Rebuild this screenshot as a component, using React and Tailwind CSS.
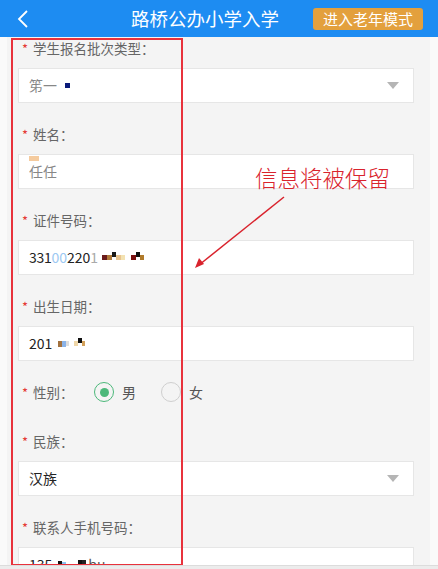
import React from "react";

const Star = () => <span className="text-[#e53935] text-[13px] mr-[5px] relative top-[1px]">*</span>;

const Label = ({ children }) => (
  <div className="h-5 flex items-center pl-[4px] text-[13.5px] text-[#666] mb-[10px]">
    <Star />
    {children}
  </div>
);

const Caret = () => (
  <svg width="12" height="7" viewBox="0 0 12 7" className="ml-auto mr-[6px]">
    <path d="M0 0 L12 0 L6 7 Z" fill="#b5b5b5" />
  </svg>
);

const Box = ({ children, select }) => (
  <div className="h-[35px] bg-white border border-[#e6e6e6] flex items-center pl-[10px] pr-[8px] text-[14px] text-[#222] mb-[21px]">
    {children}
    {select && <Caret />}
  </div>
);

const Px = ({ c, w = 4, h = 5, up = 0 }) => (
  <span className="inline-block" style={{ background: c, width: w, height: h, marginTop: up }} />
);

export default function App() {
  return (
    <div
      className="relative w-[438px] h-[569px] overflow-hidden bg-[#fafafa]"
      style={{ fontFamily: '"Noto Sans CJK SC", "Noto Sans", sans-serif' }}
    >
      <div className="h-[37px] bg-[#1d8cf2] flex items-center relative">
        <svg width="12" height="18" viewBox="0 0 12 18" className="ml-[17px]">
          <path d="M10 1 L2 9 L10 17" stroke="white" strokeWidth="1.8" fill="none" />
        </svg>
        <div className="absolute left-[131px] top-0 h-[37px] flex items-center text-white text-[18.5px]">
          路桥公办小学入学
        </div>
        <div className="ml-auto mr-[15px] h-[22px] px-[10px] rounded-[3px] bg-[#e3a03d] text-white text-[15px] leading-[22px]">
          进入老年模式
        </div>
      </div>

      <div className="ml-[7px] mr-[8px] bg-[#f4f4f4] pl-[11px] pr-[16px] pt-[1px] h-[532px]">
        <Label>学生报名批次类型：</Label>
        <Box select>
          <span className="text-[#555] text-[14px] opacity-70">笫一</span>
          <span className="inline-block w-[5px] h-[5px] bg-[#0a1a7a] ml-[8px]" />
        </Box>

        <Label>姓名：</Label>
        <Box>
          <span className="relative text-[#555] opacity-70">
            <span className="absolute left-0 -top-[5px] w-[10px] h-[5px] bg-[#f2b676]" />
            任任
          </span>
        </Box>

        <Label>证件号码：</Label>
        <Box>
          <span className="tracking-[-0.3px]">331</span>
          <span className="text-[#9cc8f2]">00</span>
          <span>220</span>
          <span className="text-[#aaa]">1</span>
          <span className="inline-flex items-center ml-[4px] gap-0">
            <Px c="#6a1b1b" w={5} />
            <Px c="#b07a3a" w={5} />
            <Px c="#1a1a1a" w={4} up={-6} />
            <Px c="#e9c48e" w={5} />
            <Px c="#f3e2b2" w={4} />
            <span className="w-[6px]" />
            <Px c="#7a1010" w={5} />
            <Px c="#111" w={4} up={-6} />
            <Px c="#b07a2a" w={4} />
          </span>
        </Box>

        <Label>出生日期：</Label>
        <Box>
          <span>201</span>
          <span className="inline-flex items-center ml-[6px]">
            <Px c="#a3723f" w={4} h={6} />
            <Px c="#8bb3e8" w={4} h={6} />
            <Px c="#ddd" w={3} />
            <span className="w-[5px]" />
            <Px c="#f0d7a8" w={4} />
            <Px c="#111" w={4} up={-6} />
            <Px c="#d3a15a" w={3} />
          </span>
        </Box>

        <div className="h-5 flex items-center mb-[29px]">
          <div className="flex items-center pl-[4px] text-[13.5px] text-[#666] w-[76px]">
            <Star />
            性别：
          </div>
          <div className="w-[20px] h-[20px] rounded-full border-[1.5px] border-[#4cb87a] flex items-center justify-center">
            <div className="w-[9px] h-[9px] rounded-full bg-[#4cb87a]" />
          </div>
          <span className="ml-[8px] text-[14px] text-[#555]">男</span>
          <div className="ml-[25px] w-[20px] h-[20px] rounded-full border-[1.5px] border-[#cfcfcf]" />
          <span className="ml-[8px] text-[14px] text-[#555]">女</span>
        </div>

        <Label>民族：</Label>
        <Box select>
          <span>汉族</span>
        </Box>

        <Label>联系人手机号码：</Label>
        <Box>
          <span>135</span>
          <span className="inline-flex items-center ml-[6px]">
            <Px c="#111" w={4} h={8} />
            <Px c="#8bc2f2" w={4} />
            <span className="w-[12px]" />
            <Px c="#111" w={4} up={-5} />
            <Px c="#222" w={4} up={-5} />
            <span className="text-[#555] ml-[2px]">bu</span>
          </span>
        </Box>
      </div>

      {/* annotation overlay */}
      <div className="absolute left-[11px] top-[38px] w-[172px] h-[528px] border-2 border-[#e8323c] pointer-events-none" />
      <div className="absolute left-[255px] top-[166px] text-[22.5px] text-[#d9232d] font-light leading-none">
        信息将被保留
      </div>
      <svg className="absolute left-0 top-0" width="438" height="569">
        <line x1="284" y1="197" x2="199" y2="265" stroke="#d9232d" strokeWidth="1.5" />
        <path d="M195 268 L199 258 L204 264 Z" fill="#d9232d" />
      </svg>
      <div className="absolute left-0 right-0 bottom-0 h-[4px] bg-[#ececec] border-t border-[#dcdcdc]" />
    </div>
  );
}
